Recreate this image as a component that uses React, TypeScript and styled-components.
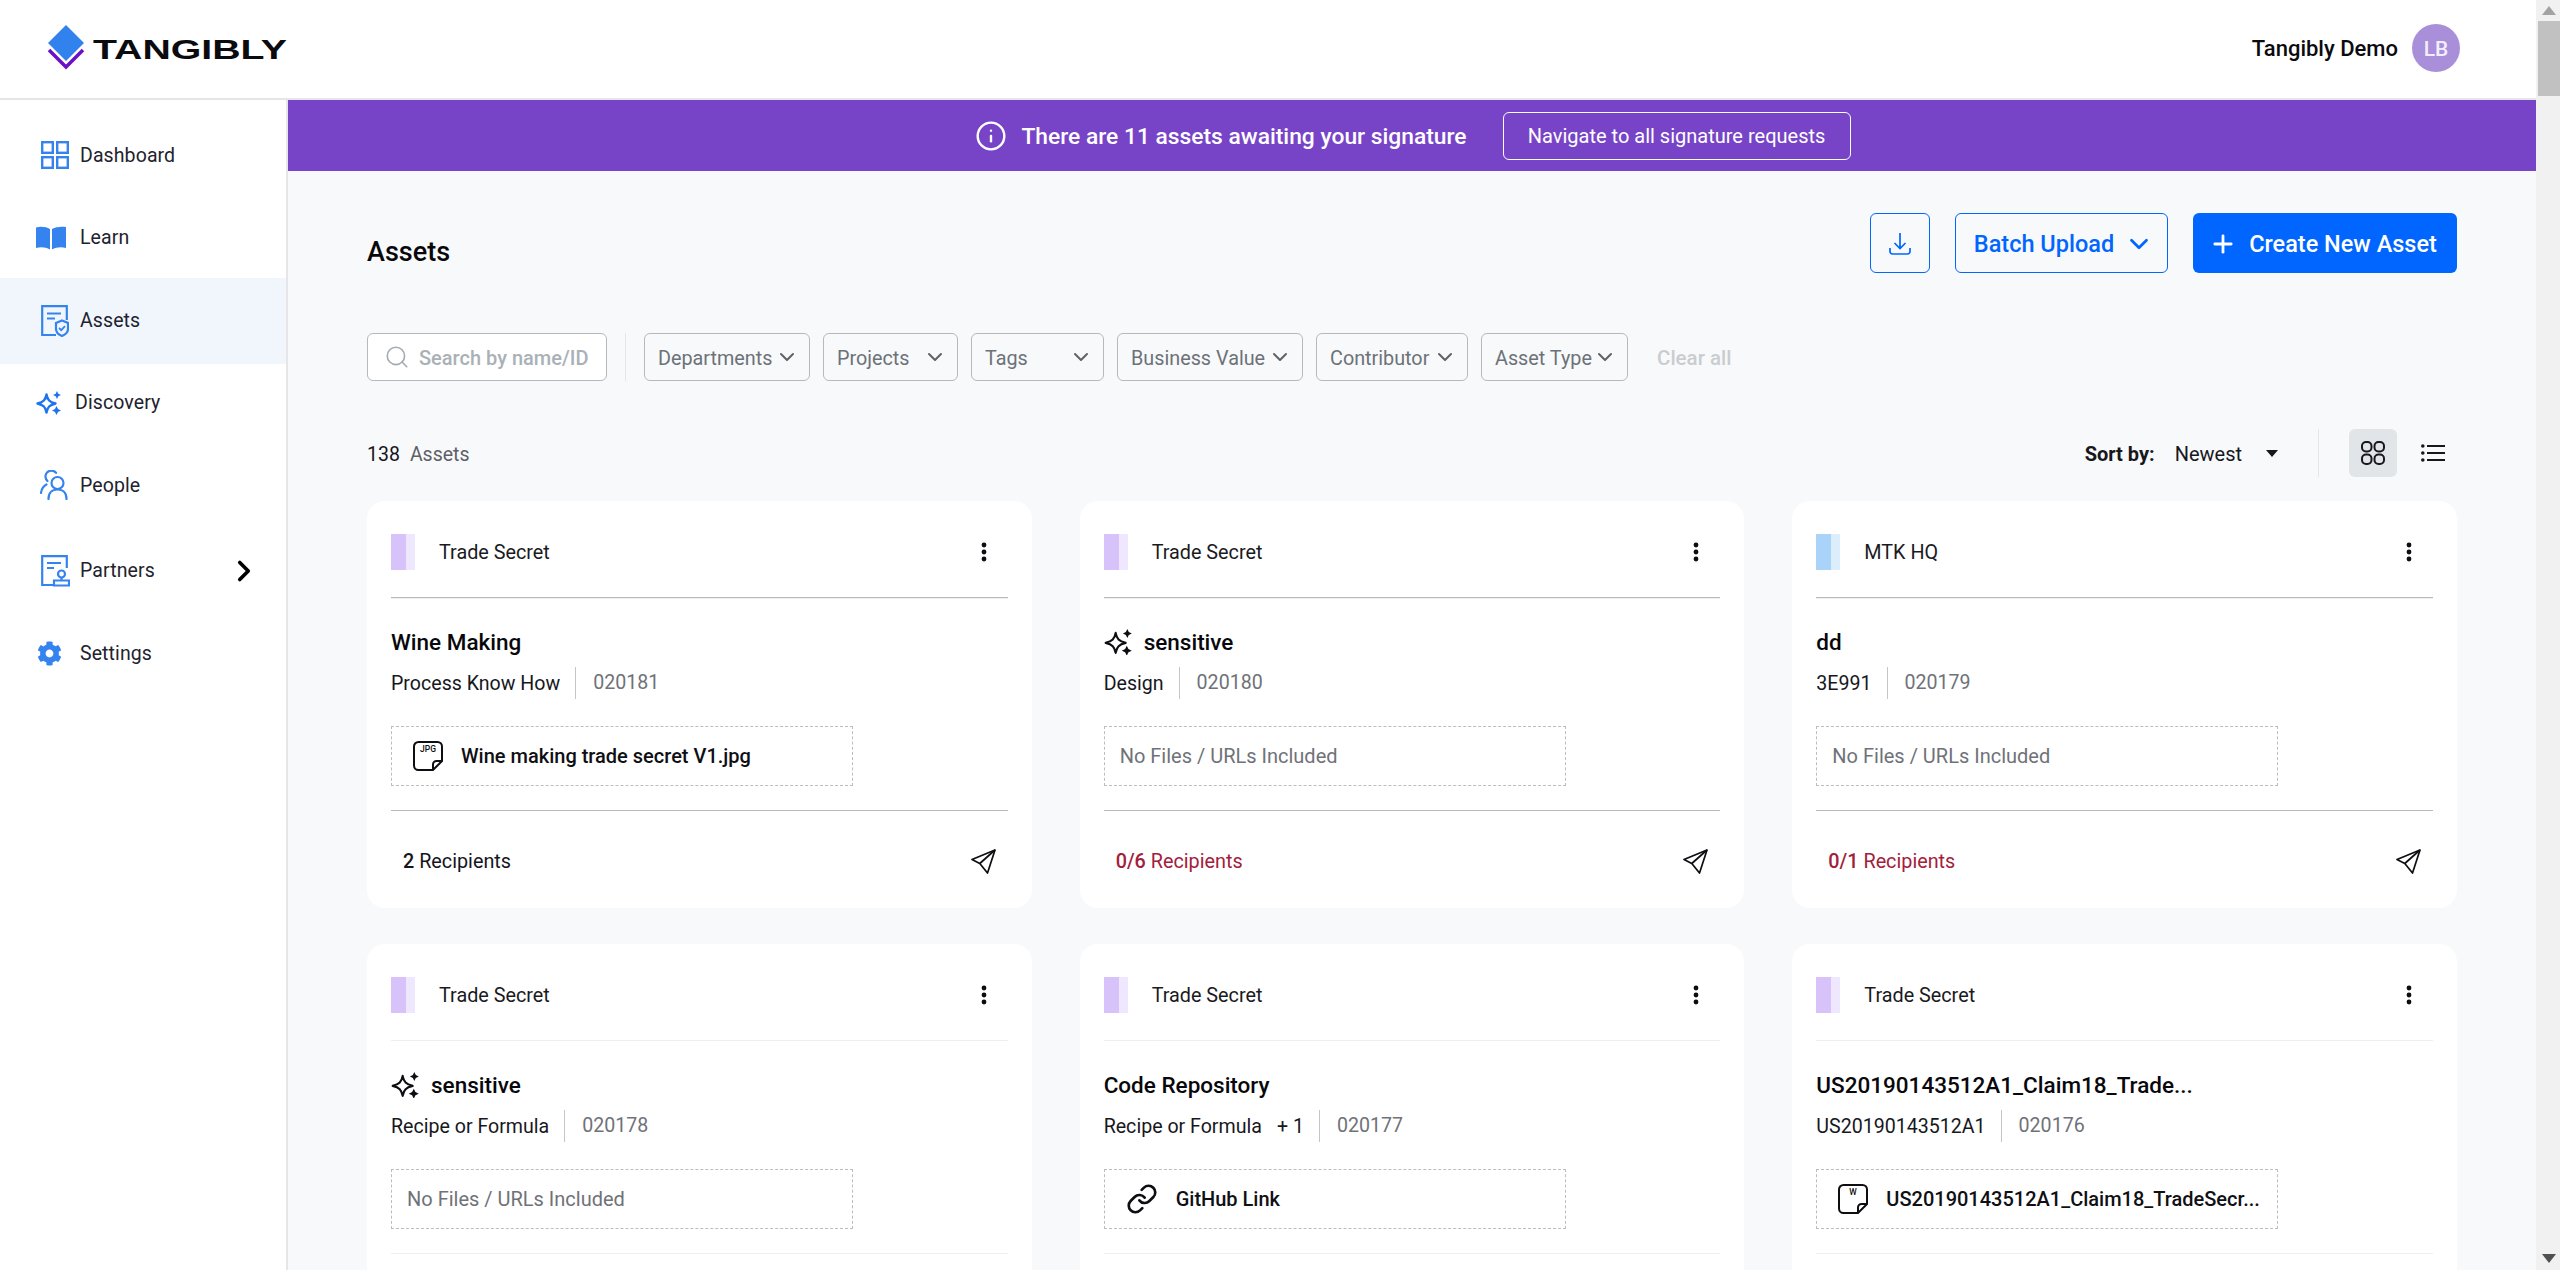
import React from "react";
import styled, { createGlobalStyle } from "styled-components";
import { ChevronDown, ChevronRight, Info, Link as LinkIcon, Plus, Search } from "lucide-react";
import { FaCog } from "react-icons/fa";

const Global = createGlobalStyle`
  html, body { margin: 0; padding: 0; height: 100%; overflow: hidden; background: #fff; }
  body { font-family: Roboto, "Noto Sans", Arial, sans-serif; color: #1a1a22; }
  * { box-sizing: border-box; }
`;

const Shell = styled.div`display: flex; width: 2560px; height: 1270px; overflow: hidden;`;
const Page = styled.div`flex: 1; min-width: 0; display: flex; flex-direction: column; height: 100%; overflow: hidden;`;

const Scrollbar = styled.div`
  width: 24px; height: 100%; flex: none; background: #f1f1f1; display: flex; flex-direction: column; align-items: center;
  justify-content: space-between; padding: 6px 0 7px 2px;
`;
const ScrollTop = styled.div`display: flex; flex-direction: column; align-items: center; gap: 6px; width: 100%;`;
const Thumb = styled.div`width: 100%; height: 75px; background: #c1c1c1;`;
const Arrow = styled.div<{ $down?: boolean }>`
  width: 0; height: 0; border-left: 7px solid transparent; border-right: 7px solid transparent;
  ${(p) => (p.$down ? "border-top: 9px solid #505050;" : "border-bottom: 9px solid #a3a3a3;")}
`;

const Header = styled.header`
  height: 100px; flex: none; display: flex; align-items: center; justify-content: space-between;
  border-bottom: 2px solid #e6e6e8; padding: 0 76px 2px 48px; background: #fff;
`;
const LogoWrap = styled.div`display: flex; align-items: center;`;
const User = styled.div`display: flex; align-items: center; gap: 14px;`;
const UserName = styled.span`font-size: 22px; font-weight: 500; color: #0b0b0f;`;
const Avatar = styled.div`
  width: 48px; height: 48px; border-radius: 50%; background: #a98fd9; color: #f3eefb; font-size: 21px; font-weight: 500;
  display: flex; align-items: center; justify-content: center; padding-top: 2px;
`;

const Body = styled.div`flex: 1; display: flex; min-height: 0;`;
const Side = styled.nav`
  width: 288px; flex: none; background: #fff; border-right: 2px solid #e6e6e8; padding-top: 14px; display: flex; flex-direction: column;
`;
const NavItem = styled.div<{ $active?: boolean; $more?: boolean; $pad: number; $slot: number }>`
  height: ${(p) => (p.$active ? 86 : 82.4)}px; margin: ${(p) => (p.$active ? "-1px 0 -2px" : p.$more ? "3px 0 0" : "0")};
  display: flex; align-items: center; padding-left: ${(p) => p.$pad}px; font-size: 19.5px; color: #22222e;
  background: ${(p) => (p.$active ? "#f1f6fd" : "transparent")};
  & > svg:first-child { flex: none; margin-right: ${(p) => p.$slot}px; }
`;
const NavLabel = styled.span`flex: none; width: 147px; letter-spacing: 0.1px;`;

const Main = styled.main`flex: 1; min-width: 0; background: #f8f9fb; display: flex; flex-direction: column; overflow: hidden;`;
const Banner = styled.div`
  height: 71px; flex: none; background: #7744c7; color: #fff; display: flex; align-items: center; justify-content: center; padding-left: 2px;
`;
const BannerText = styled.span`font-size: 22.8px; font-weight: 500; margin: 2px 36px 0 14px;`;
const BannerButton = styled.div`
  height: 48px; width: 348px; border: 1px solid #fff; border-radius: 6px; display: flex; align-items: center; justify-content: center; font-size: 20px; padding-top: 1px;
`;

const Content = styled.div`padding: 42px 79px 0 79px; display: flex; flex-direction: column;`;
const TitleRow = styled.div`display: flex; align-items: center; justify-content: space-between; height: 60px;`;
const Title = styled.h1`margin: 18px 0 0; font-size: 27px; font-weight: 500; color: #08080c;`;
const Actions = styled.div`display: flex; gap: 25px;`;
const OutlineBtn = styled.div<{ $w: number }>`
  width: ${(p) => p.$w}px; height: 60px; border: 1.5px solid #0066ff; border-radius: 6px; color: #0066ff; font-size: 23.5px; font-weight: 500;
  display: flex; align-items: center; justify-content: center; gap: 10px; padding: 1px 0 0 ${(p) => (p.$w > 100 ? 5 : 0)}px;
`;
const PrimaryBtn = styled.div`
  width: 264px; height: 60px; background: #0066ff; border-radius: 6px; color: #fff; font-size: 23.5px; font-weight: 500;
  display: flex; align-items: center; justify-content: center; gap: 12px; padding: 1px 4px 0 0;
`;

const Filters = styled.div`margin-top: 60px; height: 48px; display: flex; align-items: center; gap: 13px;`;
const SearchBox = styled.div`
  width: 240px; height: 48px; border: 1px solid #b4b9be; border-radius: 6px; background: #fff; display: flex; align-items: center; gap: 9px;
  padding-left: 16px; font-size: 20px; font-weight: 500; color: #a9b1b7; flex: none; white-space: nowrap;
`;
const SearchText = styled.span`margin-top: 2px;`;
const VDivider = styled.div`width: 1px; height: 48px; background: #e4e6e9; margin: 0 5px;`;
const Filter = styled.div<{ $w: number }>`
  width: ${(p) => p.$w}px; flex: none; height: 48px; border: 1px solid #b4b9be; border-radius: 6px; display: flex; align-items: center; justify-content: space-between;
  padding: 0 10px 0 13px; font-size: 19.8px; color: #6c7278; white-space: nowrap;
`;
const FilterText = styled.span`margin-top: 2px;`;
const ClearAll = styled.span`font-size: 20.5px; font-weight: 500; color: #c9cdd0; margin: 2px 0 0 16px;`;

const ListBar = styled.div`margin-top: 48px; height: 48px; display: flex; align-items: center; justify-content: space-between;`;
const Count = styled.div`font-size: 19.5px; color: #15151c; display: flex; gap: 10px; margin-top: 2px;`;
const CountLabel = styled.span`color: #5f5f68;`;
const SortArea = styled.div`display: flex; align-items: center;`;
const SortLabel = styled.span`font-size: 20px; font-weight: 700; color: #17171d; margin-top: 2px;`;
const SortValue = styled.span`font-size: 20px; color: #17171d; margin: 2px 0 0 20px;`;
const Caret = styled.div`width: 0; height: 0; border-left: 6.5px solid transparent; border-right: 6.5px solid transparent; border-top: 7px solid #17171d; margin-left: 24px;`;
const SortDivider = styled.div`width: 1px; height: 48px; background: #e4e6e9; margin: 0 30px 0 40px;`;
const ViewBtn = styled.div<{ $on?: boolean }>`
  width: 48px; height: 48px; border-radius: 6px; display: flex; align-items: center; justify-content: center;
  background: ${(p) => (p.$on ? "#e2e5e8" : "transparent")}; margin-left: ${(p) => (p.$on ? 0 : 12)}px;
`;

const Grid = styled.div`margin-top: 24px; display: grid; grid-template-columns: repeat(3, 1fr); gap: 36px 48px;`;
const Card = styled.article`background: #fff; border-radius: 18px; height: 407px; padding: 0 24px; display: flex; flex-direction: column;`;
const CardTop = styled.div<{ $soft?: boolean }>`
  height: 97px; flex: none; display: flex; align-items: center; justify-content: space-between; padding-top: 6px;
  border-bottom: 1px solid ${(p) => (p.$soft ? "#eeeff0" : "#b9b9b9")};
  box-shadow: ${(p) => (p.$soft ? "none" : "0 1px 0 #efefef")};
`;
const TypeWrap = styled.div`display: flex; align-items: center; gap: 24px; font-size: 19.8px; color: #1a1a22;`;
const Swatch = styled.div<{ $a: string; $b: string }>`
  width: 24px; height: 36px; background: linear-gradient(90deg, ${(p) => p.$a} 0 15px, ${(p) => p.$b} 15px 24px);
`;
const Kebab = styled.svg`margin-right: 21px;`;
const CardTitle = styled.h2`
  margin: 28px 0 0; height: 32px; font-size: 22.5px; line-height: 32px; font-weight: 500; color: #08080c; display: flex; align-items: center; gap: 10px;
  white-space: nowrap;
`;
const Meta = styled.div`margin-top: 9px; height: 32px; display: flex; align-items: center; font-size: 19.6px; color: #17171d;`;
const Extra = styled.span`margin-left: 15px;`;
const MetaId = styled.span`margin-left: 15px; padding-left: 17px; border-left: 1px solid #c4c5c7; height: 32px; line-height: 32px; color: #6f7278;`;
const FileBox = styled.div<{ $empty?: boolean }>`
  margin-top: 27px; width: 462px; height: 60px; flex: none; border: 1px dashed #bdbdbd; display: flex; align-items: center; gap: 18px; padding-left: ${(p) => (p.$empty ? 15 : 21)}px;
  font-size: 20px; font-weight: ${(p) => (p.$empty ? 400 : 500)}; color: ${(p) => (p.$empty ? "#6f7278" : "#0f0f14")}; white-space: nowrap; overflow: hidden;
`;
const CardFoot = styled.div<{ $soft?: boolean }>`
  margin-top: 24px; border-top: 1px solid ${(p) => (p.$soft ? "#eeeff0" : "#b9b9b9")}; flex: 1; display: flex; align-items: center; justify-content: space-between;
  padding: 3px 12px 0 12px; font-size: 19.8px;
`;
const Recip = styled.span<{ $warn?: boolean }>`color: ${(p) => (p.$warn ? "#a3203c" : "#15151c")};`;
const RecipNum = styled.b`font-weight: 500;`;

const B = "#3583ee";

const NavGrid = () => (
  <svg width="28" height="28" viewBox="0 0 28 28" fill="none" stroke={B} strokeWidth="2.4">
    <rect x="1.2" y="1.2" width="10.6" height="10.6" /><rect x="16.2" y="1.2" width="10.6" height="10.6" />
    <rect x="1.2" y="16.2" width="10.6" height="10.6" /><rect x="16.2" y="16.2" width="10.6" height="10.6" />
  </svg>
);
const NavBook = () => (
  <svg width="30" height="24" viewBox="0 0 30 24" fill={B}>
    <path d="M0 1.5 C5 .3 10 .8 14 3 V23.5 C10 21.3 5 20.8 0 22 Z" />
    <path d="M30 1 C25 .3 20 .8 16 3 V23.5 C20 21.3 25 20.8 30 22 Z" />
  </svg>
);
const NavAssets = () => (
  <svg width="28" height="32" viewBox="0 0 28 32" fill="none" stroke={B} strokeWidth="2.2">
    <path d="M15 30H1.2V1.2H25.8V15" />
    <path d="M6 8.5H20M6 13.5H14" />
    <path d="M21 15.5l6 2.4v6.2c0 3.2-2.6 5.6-6 6.900-3.4-1.300-6-3.700-6-6.900v-6.200z" fill="#f1f6fd" />
    <path d="M18 23l2.200 2.200 3.800-4" strokeWidth="1.800" />
  </svg>
);
const Sparkle = ({ color, w, s }: { color: string; w: number; s: number }) => (
  <svg width={s} height={(s * 24) / 27} viewBox="0 0 27 24" fill="none" stroke={color} strokeWidth={w} strokeLinejoin="round" style={{ flex: "none" }}>
    <path d="M10.500 3.500C11.500 9 13.500 11 19.500 12.500C13.500 14 11.500 16 10.500 21.500C9.500 16 7.500 14 1.500 12.500C7.500 11 9.500 9 10.500 3.500z" />
    <path d="M21 0l1.300 2.700L25 4l-2.700 1.300L21 8l-1.300-2.700L17 4l2.700-1.300z" fill={color} stroke="none" />
    <path d="M20.500 15l1.500 3 3 1.500-3 1.500-1.500 3-1.500-3-3-1.500 3-1.500z" fill={color} stroke="none" />
  </svg>
);
const NavPeople = () => (
  <svg width="30" height="30" viewBox="0 0 30 30" fill="none" stroke={B} strokeWidth="2.200" strokeLinecap="round">
    <circle cx="17.500" cy="13" r="6" />
    <path d="M8.500 29c0-6 3.500-9.500 9-9.500s9 3.500 9 9.500" />
    <path d="M16 2.800A6 6 0 0 0 7 2.500 6 6 0 0 0 7.500 11" />
    <path d="M1 23c.5-4 2.500-7 5.500-8.500" />
  </svg>
);
const NavPartners = () => (
  <svg width="29" height="32" viewBox="0 0 29 32" fill="none" stroke={B} strokeWidth="2.200">
    <path d="M13 30H1.200V1.200H25.800V13" />
    <path d="M6 8H20M6 13H13" />
    <circle cx="20.500" cy="19" r="3.500" />
    <path d="M20.500 22.500V25M13 25.500H28V30.500H13z" />
  </svg>
);
const Plane = () => (
  <svg width="25" height="25" viewBox="0 0 25 25" fill="none" stroke="#0d0d12" strokeWidth="1.700" strokeLinejoin="round">
    <path d="M24 1 1 10.500 8.800 14.500 16.500 24z" /><path d="M24 1 8.800 14.500" />
  </svg>
);
const Dots = () => (
  <Kebab width="6" height="20" viewBox="0 0 6 20" fill="#0d0d12">
    <circle cx="3" cy="3" r="2.400" /><circle cx="3" cy="10" r="2.400" /><circle cx="3" cy="17" r="2.400" />
  </Kebab>
);
const FileGlyph = ({ tag }: { tag: string }) => (
  <svg width="30" height="30" viewBox="0 0 30 30" fill="none" stroke="#0d0d12" strokeWidth="2" style={{ flex: "none" }}>
    <path d="M5.500 1h19A4.500 4.500 0 0 1 29 5.500V20l-9 9H5.500A4.500 4.500 0 0 1 1 24.500v-19A4.500 4.500 0 0 1 5.500 1z" />
    <path d="M29 20h-5.500A3.500 3.500 0 0 0 20 23.500V29" />
    <text x="15" y="11" textAnchor="middle" fontSize="8.500" fontFamily="Roboto, sans-serif" fill="#0d0d12" stroke="none">{tag}</text>
  </svg>
);

const nav = [
  { label: "Dashboard", icon: <NavGrid />, pad: 41, slot: 11 },
  { label: "Learn", icon: <NavBook />, pad: 36, slot: 14 },
  { label: "Assets", icon: <NavAssets />, pad: 41, slot: 11, active: true },
  { label: "Discovery", icon: <Sparkle color="#1d73f0" w={2.4} s={27} />, pad: 36, slot: 12 },
  { label: "People", icon: <NavPeople />, pad: 40, slot: 10 },
  { label: "Partners", icon: <NavPartners />, pad: 41, slot: 10, more: true },
  { label: "Settings", icon: <FaCog size={25} color={B} />, pad: 37, slot: 18 },
];

const filters: [string, number][] = [
  ["Departments", 166], ["Projects", 135], ["Tags", 133], ["Business Value", 186], ["Contributor", 152], ["Asset Type", 147],
];

const PURPLE: [string, string] = ["#d7c2f9", "#efe7fd"];
const BLUE: [string, string] = ["#a9d3f8", "#dcedfc"];

type Asset = {
  type: string; swatch: [string, string]; title: string; spark?: boolean; meta: string; extra?: string; id: string;
  file?: string; tag?: string; link?: boolean; count?: string; warn?: boolean;
};
const assets: Asset[] = [
  { type: "Trade Secret", swatch: PURPLE, title: "Wine Making", meta: "Process Know How", id: "020181", file: "Wine making trade secret V1.jpg", tag: "JPG", count: "2" },
  { type: "Trade Secret", swatch: PURPLE, title: "sensitive", spark: true, meta: "Design", id: "020180", count: "0/6", warn: true },
  { type: "MTK HQ", swatch: BLUE, title: "dd", meta: "3E991", id: "020179", count: "0/1", warn: true },
  { type: "Trade Secret", swatch: PURPLE, title: "sensitive", spark: true, meta: "Recipe or Formula", id: "020178" },
  { type: "Trade Secret", swatch: PURPLE, title: "Code Repository", meta: "Recipe or Formula", extra: "+ 1", id: "020177", file: "GitHub Link", link: true },
  { type: "Trade Secret", swatch: PURPLE, title: "US20190143512A1_Claim18_Trade...", meta: "US20190143512A1", id: "020176", file: "US20190143512A1_Claim18_TradeSecr...", tag: "W" },
];

export default function App() {
  return (
    <Shell>
      <Global />
      <Page>
        <Header>
          <LogoWrap>
            <svg width="242" height="46" viewBox="0 0 242 46">
              <path d="M18 0 36 18 18 36 0 18z" fill="#3182ec" />
              <path d="M1 25 18 42 35 25" fill="none" stroke="#6a10c8" strokeWidth="3.500" />
              <text x="45" y="34" fontFamily="'Liberation Sans', sans-serif" fontWeight="700" fontSize="27" textLength="194" lengthAdjust="spacingAndGlyphs" fill="#0b0b0f">TANGIBLY</text>
            </svg>
          </LogoWrap>
          <User>
            <UserName>Tangibly Demo</UserName>
            <Avatar>LB</Avatar>
          </User>
        </Header>
        <Body>
          <Side>
            {nav.map((n) => (
              <NavItem key={n.label} $active={n.active} $more={n.more} $pad={n.pad} $slot={n.slot}>
                {n.icon}
                <NavLabel>{n.label}</NavLabel>
                {n.more && <ChevronRight size={34} color="#000" strokeWidth={2.6} />}
              </NavItem>
            ))}
          </Side>
          <Main>
            <Banner>
              <Info size={32} color="#fff" strokeWidth={1.8} />
              <BannerText>There are 11 assets awaiting your signature</BannerText>
              <BannerButton>Navigate to all signature requests</BannerButton>
            </Banner>
            <Content>
              <TitleRow>
                <Title>Assets</Title>
                <Actions>
                  <OutlineBtn $w={60}>
                    <svg width="22" height="24" viewBox="0 0 22 24" fill="none" stroke="#0066ff" strokeWidth="1.700">
                      <path d="M11 1v15M5.500 11l5.500 5.500 5.500-5.500" />
                      <path d="M1 16v3.500A2.500 2.500 0 0 0 3.500 22h15a2.500 2.500 0 0 0 2.500-2.500V16" />
                    </svg>
                  </OutlineBtn>
                  <OutlineBtn $w={213}>
                    Batch Upload
                    <ChevronDown size={30} strokeWidth={2.2} />
                  </OutlineBtn>
                  <PrimaryBtn>
                    <Plus size={28} strokeWidth={2.4} />
                    Create New Asset
                  </PrimaryBtn>
                </Actions>
              </TitleRow>
              <Filters>
                <SearchBox>
                  <Search size={26} strokeWidth={1.5} color="#a3abb1" />
                  <SearchText>Search by name/ID</SearchText>
                </SearchBox>
                <VDivider />
                {filters.map(([label, w]) => (
                  <Filter key={label} $w={w}>
                    <FilterText>{label}</FilterText>
                    <ChevronDown size={24} strokeWidth={2} color="#5e6368" />
                  </Filter>
                ))}
                <ClearAll>Clear all</ClearAll>
              </Filters>
              <ListBar>
                <Count>
                  138 <CountLabel>Assets</CountLabel>
                </Count>
                <SortArea>
                  <SortLabel>Sort by:</SortLabel>
                  <SortValue>Newest</SortValue>
                  <Caret />
                  <SortDivider />
                  <ViewBtn $on>
                    <svg width="24" height="24" viewBox="0 0 24 24" fill="none" stroke="#17171d" strokeWidth="2">
                      <rect x="1" y="1" width="9.500" height="9.500" rx="4" /><rect x="13.500" y="1" width="9.500" height="9.500" rx="4" />
                      <rect x="1" y="13.500" width="9.500" height="9.500" rx="4" /><rect x="13.500" y="13.500" width="9.500" height="9.500" rx="4" />
                    </svg>
                  </ViewBtn>
                  <ViewBtn>
                    <svg width="24" height="18" viewBox="0 0 24 18" fill="none" stroke="#17171d" strokeWidth="2">
                      <path d="M6 2h18M6 9h18M6 16h18" />
                      <circle cx="1.800" cy="2" r="1.800" fill="#17171d" stroke="none" />
                      <circle cx="1.800" cy="9" r="1.800" fill="#17171d" stroke="none" />
                      <circle cx="1.800" cy="16" r="1.800" fill="#17171d" stroke="none" />
                    </svg>
                  </ViewBtn>
                </SortArea>
              </ListBar>
              <Grid>
                {assets.map((a, i) => {
                  const soft = i > 2;
                  return (
                    <Card key={a.id}>
                      <CardTop $soft={soft}>
                        <TypeWrap>
                          <Swatch $a={a.swatch[0]} $b={a.swatch[1]} />
                          {a.type}
                        </TypeWrap>
                        <Dots />
                      </CardTop>
                      <CardTitle>
                        {a.spark && <Sparkle color="#0d0d12" w={1.9} s={30} />}
                        {a.title}
                      </CardTitle>
                      <Meta>
                        {a.meta}
                        {a.extra && <Extra>{a.extra}</Extra>}
                        <MetaId>{a.id}</MetaId>
                      </Meta>
                      <FileBox $empty={!a.file}>
                        {a.tag && <FileGlyph tag={a.tag} />}
                        {a.link && <LinkIcon size={32} strokeWidth={2} color="#0d0d12" style={{ flex: "none" }} />}
                        {a.file ?? "No Files / URLs Included"}
                      </FileBox>
                      <CardFoot $soft={soft}>
                        {a.count && (
                          <>
                            <Recip $warn={a.warn}>
                              <RecipNum>{a.count}</RecipNum> Recipients
                            </Recip>
                            <Plane />
                          </>
                        )}
                      </CardFoot>
                    </Card>
                  );
                })}
              </Grid>
            </Content>
          </Main>
        </Body>
      </Page>
      <Scrollbar>
        <ScrollTop>
          <Arrow />
          <Thumb />
        </ScrollTop>
        <Arrow $down />
      </Scrollbar>
    </Shell>
  );
}
